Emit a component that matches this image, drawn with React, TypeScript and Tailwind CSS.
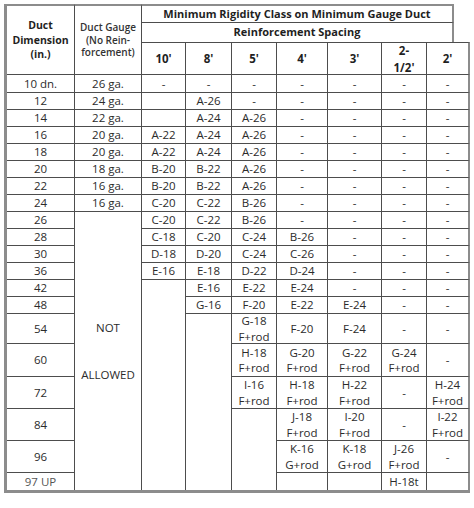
import clsx from "clsx"

type Spec = string | { t: string; span?: string; cls?: string }

// grid rows 4..23 of the sheet, one entry per row, cells in column order
const rows: Spec[][] = [
  ["10 dn.", "26 ga.", "-", "-", "-", "-", "-", "-", "-"],
  ["12", "24 ga.", "", "A-26", "-", "-", "-", "-", "-"],
  ["14", "22 ga.", "", "A-24", "A-26", "-", "-", "-", "-"],
  ["16", "20 ga.", "A-22", "A-24", "A-26", "-", "-", "-", "-"],
  ["18", "20 ga.", "A-22", "A-24", "A-26", "-", "-", "-", "-"],
  ["20", "18 ga.", "B-20", "B-22", "A-26", "-", "-", "-", "-"],
  ["22", "16 ga.", "B-20", "B-22", "A-26", "-", "-", "-", "-"],
  ["24", "16 ga.", "C-20", "C-22", "B-26", "-", "-", "-", "-"],
  ["26", { t: "NOT ALLOWED", span: "row-span-12 border-b-0" }, "C-20", "C-22", "B-26", "-", "-", "-", "-"],
  ["28", "C-18", "C-20", "C-24", "B-26", "-", "-", "-"],
  ["30", "D-18", "D-20", "C-24", "C-26", "-", "-", "-"],
  ["36", "E-16", "E-18", "D-22", "D-24", "-", "-", "-"],
  ["42", { t: "", span: "row-span-8 border-b-0" }, "E-16", "E-22", "E-24", "-", "-", "-"],
  ["48", "G-16", "F-20", "E-22", "E-24", "-", "-"],
  ["54", { t: "", span: "row-span-6 border-b-0" }, "G-18\nF+rod", "F-20", "F-24", "-", "-"],
  ["60", "H-18\nF+rod", "G-20\nF+rod", "G-22\nF+rod", "G-24\nF+rod", "-"],
  ["72", "I-16\nF+rod", "H-18\nF+rod", "H-22\nF+rod", "-", "H-24\nF+rod"],
  ["84", { t: "", span: "row-span-3 border-b-0" }, "J-18\nF+rod", "I-20\nF+rod", "-", "I-22\nF+rod"],
  ["96", "K-16\nG+rod", "K-18\nG+rod", "J-26\nF+rod", "-"],
  [{ t: "97 UP", cls: "text-[10.5px] text-[#555]" }, "", "", "H-18t", ""],
]

const spacings = ["10'", "8'", "5'", "4'", "3'", "2-\n1/2'", "2'"]

const line = "border-r border-b border-[#4d4d4d]"

function Cell({ className, children }: { className?: string; children?: React.ReactNode }) {
  return (
    <div className={clsx("flex items-center justify-center text-center whitespace-pre-line", line, className)}>
      {children}
    </div>
  )
}

export default function App() {
  return (
    <div className="w-[474px] h-[508px] bg-white pt-[4px] pl-[4px] font-['Open_Sans',sans-serif] text-[#2b2b2b]">
      <div className="w-fit border-l-[3px] border-b-[3px] border-[#8c8c8c]">
        <div className="grid grid-cols-[68px_67px_44px_46px_45px_51px_54px_45px_43px] grid-rows-[19px_19px_33px_18px_repeat(13,17px)_30px_33px_32px_32px_32px_17px]">
          <Cell className="row-span-3 border-t-2 border-t-[#8c8c8c] text-[10.5px] font-bold leading-[14.5px] text-[#1f1f1f]">
            {"Duct\nDimension\n(in.)"}
          </Cell>
          <Cell className="row-span-3 border-t-2 border-t-[#8c8c8c] text-[10px] font-semibold leading-[12.5px] text-[#333]">
            {"Duct Gauge\n(No Rein-\nforcement)"}
          </Cell>
          <Cell className="col-span-7 mr-[16px] border-t-2 border-t-[#8c8c8c] border-r-2 border-r-[#8c8c8c] text-[11px] font-bold text-[#1f1f1f]">
            Minimum Rigidity Class on Minimum Gauge Duct
          </Cell>
          <Cell className="col-span-7 mr-[16px] border-b-0 border-r-2 border-r-[#8c8c8c] text-[11px] font-bold text-[#1f1f1f]">
            Reinforcement Spacing
          </Cell>
          {spacings.map((s, i) => (
            <Cell
              key={s}
              className={clsx(
                "border-t text-[11.5px] font-bold leading-[17px] text-[#1f1f1f]",
                i === spacings.length - 1 && "border-r-2 border-r-[#8c8c8c]"
              )}
            >
              {s}
            </Cell>
          ))}

          {rows.map((row, r) =>
            row.map((c, i) => {
              const spec = typeof c === "string" ? { t: c } : c
              const last = i === row.length - 1
              const bottom = r === rows.length - 1
              return (
                <Cell
                  key={`${r}-${i}`}
                  className={clsx(
                    "text-[11.5px] leading-[15.5px]",
                    spec.span,
                    spec.cls,
                    last && "border-r-2 border-r-[#8c8c8c]",
                    bottom && "border-b-0"
                  )}
                >
                  {spec.t === "NOT ALLOWED" ? (
                    <div className="flex flex-col gap-[32px] leading-[15px]">
                      <span>NOT</span>
                      <span>ALLOWED</span>
                    </div>
                  ) : (
                    spec.t
                  )}
                </Cell>
              )
            })
          )}
        </div>
      </div>
    </div>
  )
}
